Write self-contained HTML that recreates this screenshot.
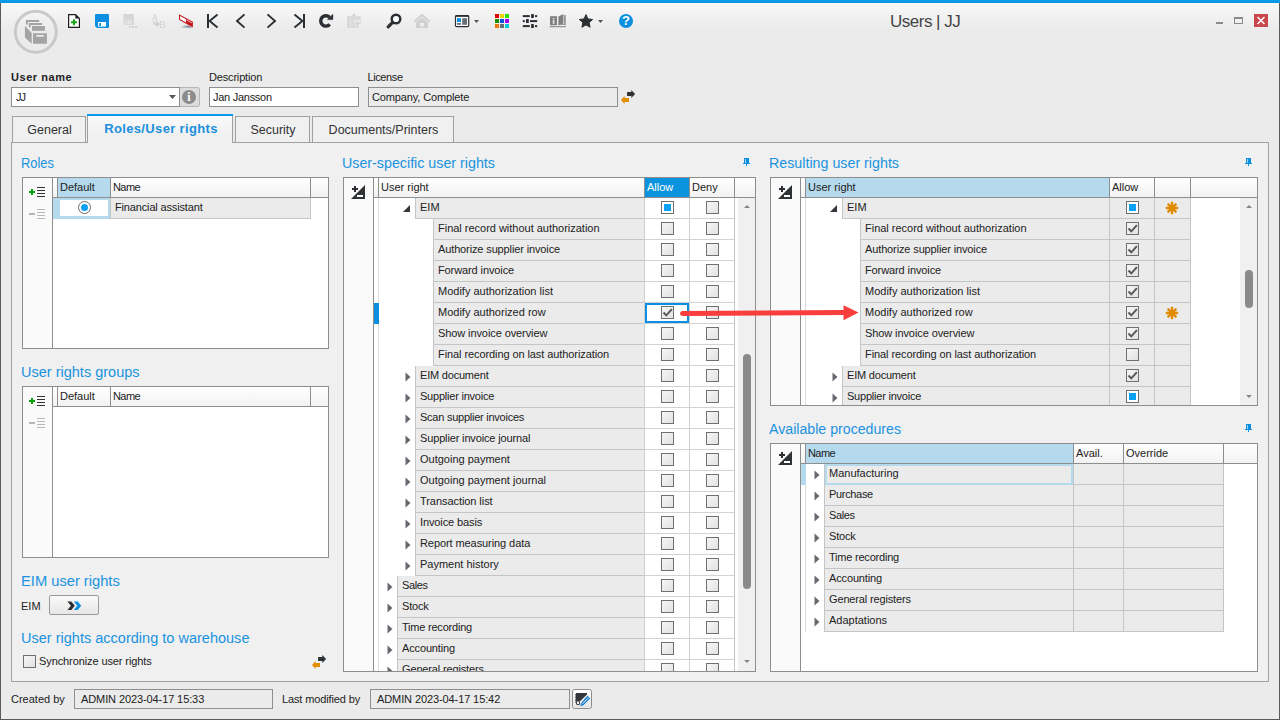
<!DOCTYPE html><html><head><meta charset="utf-8"><title>Users | JJ</title><style>
html,body{margin:0;padding:0;}
html{background:#ebebeb;}
body{width:1280px;height:720px;overflow:hidden;background:#ebebeb;font-family:"Liberation Sans",sans-serif;font-size:11px;color:#222;position:relative;}
div,span,svg{position:absolute;box-sizing:border-box;}
.t{white-space:nowrap;line-height:13px;height:13px;}
.h{font-size:15.5px;transform-origin:0 0;color:#1a93e0;line-height:18px;height:18px;white-space:nowrap;}
.grid{background:#fff;border:1px solid #8e8e8e;overflow:hidden;}
.side{left:0;top:0;bottom:0;background:#fafafa;border-right:1px solid #8e8e8e;}
.hd{background:linear-gradient(#ffffff,#f2f2f2);border-right:1px solid #8e8e8e;border-bottom:1px solid #8e8e8e;height:20px;top:0;}
.hd .t{top:3px;left:2px;}
.hdsel{background:#b5d9ed;}
.hdblue{background:#0b93dd;color:#fff;}
.cell{background:#ebebeb;border-left:1px solid #c5c5c5;border-bottom:1px solid #c5c5c5;height:21px;}
.cw{background:#fff;border-left:1px solid #cfcfcf;border-bottom:1px solid #d2d2d2;height:21px;}
.cell .t{top:3px;left:4px;}
.cb{width:13px;height:13px;border:1px solid #707070;background:linear-gradient(135deg,#f6f6f6,#e2e2e2);}
.inp{background:#fff;border:1px solid #8e8e8e;height:20px;}
.inp .t{top:3px;left:4px;}
.ro{background:#ebebeb;}
.tab{border:1px solid #a0a0a0;border-bottom:none;background:#f0f0f0;font-size:12.5px;text-align:center;line-height:15px;white-space:nowrap;}
</style></head><body>
<div style="left:0;top:0;width:1280px;height:60px;background:linear-gradient(#fafafa,#ebebeb 30px)"></div>
<div style="left:0;top:0;width:1280px;height:3px;background:linear-gradient(#08a2ee,#0b92de)"></div>
<div style="left:0;top:3px;width:1px;height:717px;background:#5a5a5a"></div>
<div style="left:1279px;top:3px;width:1px;height:717px;background:#5a5a5a"></div>
<div style="left:0;top:719px;width:1280px;height:1px;background:#5a5a5a"></div>
<svg style="left:13px;top:9px" width="46" height="46" viewBox="0 0 46 46"><circle cx="22.8" cy="22.8" r="20.5" fill="none" stroke="#c9c9c9" stroke-width="3"/><g fill="#a4a4a4"><path d="M12.9 10.9 H26.1 V12.9 H14.8 V15.6 H12.9 Z"/><path d="M15.8 14.1 H29 V16 H17.7 V18.3 H15.8 Z"/><rect x="19" y="17" width="12.9" height="4.8"/><path d="M11.95 17 L18.7 23.9 V34.7 L11.95 28.4 Z"/><path d="M20 24.2 H33.9 V34.7 H20 Z M23.2 26.1 V27.8 H30.9 V26.1 Z" fill-rule="evenodd"/></g></svg>
<svg style="left:67px;top:13px" width="14" height="16" viewBox="0 0 14 16"><path d="M1.6 1.6 H8.6 L12.4 5.4 V14.4 H1.6 Z" fill="#fff" stroke="#1e1e1e" stroke-width="1.2"/><path d="M8.4 1.4 L12.6 5.6 H8.4 Z" fill="#1e1e1e"/><path d="M4 9.2 H10 M7 6.2 V12.2" stroke="#10a810" stroke-width="1.9"/></svg>
<svg style="left:95px;top:14px" width="14" height="14" viewBox="0 0 14 14"><path d="M1.2 0 H12.8 Q14 0 14 1.2 V12.8 Q14 14 12.8 14 H2 L0 12 V1.2 Q0 0 1.2 0 Z" fill="#0c8fe0"/><rect x="3" y="8" width="8" height="4.6" fill="#fff"/><rect x="4.2" y="9" width="1.8" height="3" fill="#0c8fe0"/></svg>
<svg style="left:122px;top:14px" width="16" height="14" viewBox="0 0 16 14"><path d="M2 0 H11 Q12 0 12 1 V11 H2.8 L1.4 9.6 V0.6 Q1.4 0 2 0 Z" fill="#d6d6d6"/><rect x="3" y="6.5" width="6.5" height="3.6" fill="#e6e6e6"/><rect x="4" y="7.4" width="1.5" height="2" fill="#d0d0d0"/><rect x="7" y="12" width="2" height="1.8" fill="#d0d0d0"/><rect x="10" y="12" width="2" height="1.8" fill="#d0d0d0"/><rect x="13" y="12" width="2" height="1.8" fill="#d0d0d0"/></svg>
<span style="left:151px;top:13px;font-family:'Liberation Serif',serif;font-size:10px;line-height:10px;color:#d2d2d2">A</span>
<span style="left:159px;top:19.5px;font-family:'Liberation Serif',serif;font-size:10px;line-height:10px;color:#d2d2d2">B</span>
<svg style="left:153px;top:21px" width="7" height="6" viewBox="0 0 7 6"><path d="M1 0 V3 H5 M3.3 0.8 L5.8 3 L3.3 5.2" fill="none" stroke="#cdcdcd" stroke-width="1.4"/></svg>
<svg style="left:178px;top:13px" width="17" height="16" viewBox="0 0 17 16"><defs><linearGradient id="esh" x1="0" x2="1" y1="0" y2="0"><stop offset="0" stop-color="#5f7680" stop-opacity="0"/><stop offset="0.55" stop-color="#5f7680" stop-opacity="0.6"/><stop offset="1" stop-color="#4f646e" stop-opacity="0.95"/></linearGradient></defs><path d="M1.5 14.8 H14 L10.5 12.4 H5.5 Z" fill="url(#esh)"/><path d="M1 1.2 L14.85 8.8 V14.6 L1 6.8 Z" fill="#c8191e"/><path d="M2 2.95 L8.05 6.3 V9.5 L2 6.1 Z" fill="#fff"/><path d="M8.8 7.1 L13.9 9.8" stroke="#fff" stroke-width="0.8" opacity="0.85"/></svg>
<svg style="left:206px;top:13px" width="13" height="16" viewBox="0 0 13 16"><path d="M2 1 V15" stroke="#2b2f33" stroke-width="2" fill="none"/><path d="M11.5 1.4 L3.6 8 L11.5 14.6" stroke="#2b2f33" stroke-width="1.9" fill="none"/></svg>
<svg style="left:235px;top:13px" width="11" height="16" viewBox="0 0 11 16"><path d="M9.5 1.4 L2 8 L9.5 14.6" stroke="#2b2f33" stroke-width="1.9" fill="none"/></svg>
<svg style="left:266px;top:13px" width="11" height="16" viewBox="0 0 11 16"><path d="M1.5 1.4 L9 8 L1.5 14.6" stroke="#2b2f33" stroke-width="1.9" fill="none"/></svg>
<svg style="left:293px;top:13px" width="13" height="16" viewBox="0 0 13 16"><path d="M11 1 V15" stroke="#2b2f33" stroke-width="2" fill="none"/><path d="M1.5 1.4 L9.4 8 L1.5 14.6" stroke="#2b2f33" stroke-width="1.9" fill="none"/></svg>
<svg style="left:318px;top:13px" width="16" height="16" viewBox="0 0 16 16"><path d="M11.58 4.22 A5.2 5.2 0 1 0 11.76 11.38" stroke="#2b2f33" stroke-width="3.4" fill="none"/><path d="M14.85 1.2 V6.6 H9.5 Z" fill="#2b2f33" stroke="#2b2f33" stroke-width="0.5" stroke-linejoin="round"/></svg>
<svg style="left:346px;top:12px" width="17" height="18" viewBox="0 0 17 18"><path d="M1.2 4.2 H5.8 L8 1 L10.2 4.2 H14.8 V7.4 H7.7 V10 L10.1 12.9 V15.85 H1.2 Z" fill="#d6d6d6"/><path d="M3 5.1 H13" stroke="#e2e2e2" stroke-width="0.6"/><g fill="#efefef"><rect x="3.9" y="6.6" width="1.4" height="1.4"/><rect x="3.9" y="8.8" width="1.4" height="1.4"/><rect x="3.9" y="11" width="1.4" height="1.4"/><rect x="3.9" y="13.2" width="1.4" height="1.4"/></g><path d="M6 8.6 H7.6 M6 10.8 H7.6 M6 13 H9 " stroke="#e6e6e6" stroke-width="0.7"/><path d="M8.2 8.3 H16" stroke="#d6d6d6" stroke-width="0.8"/><path d="M8.2 9.9 H15.9 L12.6 12.7 V16.8 L10.8 15.4 V12.7 Z" fill="#d6d6d6"/></svg>
<svg style="left:386px;top:13px" width="16" height="16" viewBox="0 0 16 16"><circle cx="10" cy="6" r="4.3" fill="#fff" stroke="#2b2f33" stroke-width="2.4"/><path d="M6.6 9.4 L2.2 13.8" stroke="#2b2f33" stroke-width="3.2" stroke-linecap="round"/></svg>
<svg style="left:413px;top:13px" width="18" height="16" viewBox="0 0 18 16"><path d="M9 0.8 L17.6 8 L16.4 9.6 L9 3.6 L1.6 9.6 L0.4 8 Z" fill="#d0d0d0"/><path d="M3 9.2 L9 4.6 L15 9.2 V15 H3 Z M7 10 V13.4 H11 V10 Z" fill="#d0d0d0" fill-rule="evenodd"/></svg>
<svg style="left:454px;top:14px" width="16" height="14" viewBox="0 0 16 14"><rect x="1.5" y="1.6" width="13.2" height="11" rx="1.2" fill="#fff" stroke="#2b2f33" stroke-width="1.2"/><rect x="1.5" y="1.2" width="13.2" height="1.6" fill="#2b2f33"/><rect x="3" y="4.2" width="4" height="3.8" fill="#0c8fe0"/><rect x="3" y="9" width="4" height="1.8" fill="#6a6e76"/><rect x="8.2" y="4.2" width="4.8" height="6.6" fill="#6a6e76"/></svg>
<svg style="left:474px;top:20px" width="5" height="3" viewBox="0 0 5 3"><path d="M0 0 H5 L2.5 3 Z" fill="#555"/></svg>
<svg style="left:495px;top:14px" width="14" height="14" viewBox="0 0 14 14"><rect x="0" y="0" width="4" height="4" fill="#e00000"/><rect x="5" y="0" width="4" height="4" fill="#efd800"/><rect x="10" y="0" width="4" height="4" fill="#2de000"/><rect x="0" y="5" width="4" height="4" fill="#1c8c00"/><rect x="5" y="5" width="4" height="4" fill="#0050d8"/><rect x="10" y="5" width="4" height="4" fill="#a000f0"/><rect x="0" y="10" width="4" height="4" fill="#f07810"/><rect x="5" y="10" width="4" height="4" fill="#6a6e76"/><rect x="10" y="10" width="4" height="4" fill="#00c8d8"/></svg>
<svg style="left:522px;top:13px" width="16" height="16" viewBox="0 0 16 16"><g fill="#2b2f33"><rect x="0.8" y="2.1" width="7" height="2"/><rect x="9.1" y="0.9" width="2.8" height="4.2" rx="0.7"/><rect x="13" y="2.1" width="2.2" height="2"/><rect x="0.8" y="7.1" width="2" height="2"/><rect x="4" y="5.9" width="2.8" height="4.2" rx="0.7"/><rect x="8" y="7.1" width="7.2" height="2"/><rect x="0.8" y="12.1" width="7" height="2"/><rect x="9.1" y="10.9" width="2.8" height="4.2" rx="0.7"/><rect x="13" y="12.1" width="2.2" height="2"/></g></svg>
<svg style="left:549px;top:13px" width="18" height="15" viewBox="0 0 18 15"><rect x="1" y="3.2" width="7" height="9" fill="#808080"/><rect x="3.8" y="5" width="1.6" height="1.4" fill="#ececec"/><rect x="3.8" y="7.2" width="1.6" height="3.6" fill="#ececec"/><path d="M9.4 3.4 L14.4 1 V10.4 L9.4 12.4 Z" fill="#808080"/><path d="M15.2 2 H16.6 V12 H10.4 L12 11.2 H15.2 Z" fill="#808080"/><rect x="0.6" y="13.2" width="16.4" height="1" fill="#808080"/></svg>
<svg style="left:578px;top:13px" width="16" height="16" viewBox="0 0 16 16"><polygon points="8.00,1.60 9.94,5.93 14.66,6.44 11.14,9.62 12.11,14.26 8.00,11.90 3.89,14.26 4.86,9.62 1.34,6.44 6.06,5.93" fill="#2b2f33" stroke="#2b2f33" stroke-width="1" stroke-linejoin="round"/></svg>
<svg style="left:598px;top:20px" width="5" height="3" viewBox="0 0 5 3"><path d="M0 0 H5 L2.5 3 Z" fill="#555"/></svg>
<div style="left:619px;top:14px;width:14px;height:14px;border-radius:7px;background:#0c8fe0"></div>
<span style="left:619px;top:14px;width:14px;height:14px;text-align:center;color:#fff;font-weight:bold;font-size:13px;line-height:14px">?</span>
<span class="t" style="left:890px;top:12px;font-size:17px;letter-spacing:-0.5px;color:#444;line-height:20px;height:20px">Users | JJ</span>
<div style="left:1216px;top:22px;width:7px;height:2px;background:#8a8a8a"></div>
<div style="left:1234px;top:17px;width:9px;height:7px;border:1px solid #8a8a8a;border-top-width:2px"></div>
<div style="left:1254px;top:14px;width:14px;height:13px;background:#c8464c"></div>
<svg style="left:1254px;top:14px" width="14" height="13" viewBox="0 0 14 13"><path d="M3.5 3 L10.5 10 M10.5 3 L3.5 10" stroke="#fff" stroke-width="1.5"/></svg>
<span class="t" style="left:11px;top:71px;font-weight:bold;letter-spacing:0.55px">User name</span>
<span class="t" style="left:209px;top:71px;letter-spacing:-0.17px">Description</span>
<span class="t" style="left:367.5px;top:71px;letter-spacing:-0.4px">License</span>
<div class="inp" style="left:11px;top:87px;width:169px"><span class="t" style="letter-spacing:-1px">JJ</span><svg style="left:157px;top:7px" width="7" height="4" viewBox="0 0 7 4"><path d="M0 0 H7 L3.5 4 Z" fill="#555"/></svg></div>
<div style="left:180px;top:87px;width:20px;height:20px;background:#dcdcdc;border:1px solid #b6b6b6;border-left:none;border-radius:0 3px 3px 0"></div>
<div style="left:182px;top:90px;width:14px;height:14px;border-radius:7px;background:#8c8c8c"></div>
<span style="left:182px;top:90px;width:14px;height:14px;text-align:center;color:#fff;font-weight:bold;font-size:12px;line-height:14px;font-family:'Liberation Serif',serif">i</span>
<div class="inp" style="left:209px;top:87px;width:150px"><span class="t" style="left:3px;letter-spacing:-0.27px">Jan Jansson</span></div>
<div class="inp ro" style="left:368px;top:87px;width:250px"><span class="t" style="left:3px;letter-spacing:-0.13px">Company, Complete</span></div>
<svg style="left:621px;top:90px" width="15" height="14" viewBox="0 0 15 14"><path d="M6.1 2.1 H10.3 V0.1 L14.1 4 L10.3 7.9 V5.9 H6.1 Z" fill="#2f3336"/><path d="M8 8.1 H3.6 V6.1 L0 10 L3.6 13.9 V12 H8 Z" fill="#e38d00"/></svg>
<div style="left:11px;top:142px;width:1258px;height:540px;background:#f0f0f0;border:1px solid #a0a0a0"></div>
<div class="tab" style="left:12px;top:116px;width:74px;height:26px;padding-top:6px;padding-left:1px;color:#333;letter-spacing:0">General</div>
<div class="tab" style="left:235px;top:116px;width:75px;height:26px;padding-top:6px;padding-left:1px;color:#333;letter-spacing:0">Security</div>
<div class="tab" style="left:312px;top:116px;width:142px;height:26px;padding-top:6px;padding-left:1px;color:#333;letter-spacing:0">Documents/Printers</div>
<div class="tab" style="left:87px;top:114px;width:146px;height:29px;border-top:none;background:linear-gradient(#fbfbfb,#f0f0f0 22px);color:#1b8fdc;font-weight:bold;font-size:13px;letter-spacing:0.35px;padding-top:7px;padding-left:2px">Roles/User rights<div style="left:-1px;top:0;width:146px;height:2px;background:#0a98ea"></div></div>
<span class="h" style="left:21px;top:153.5px;transform:scaleX(0.832)">Roles</span>
<div class="grid" style="left:22px;top:177px;width:307px;height:172px"><div class="side" style="width:30px"></div><svg style="left:6px;top:9px" width="17" height="10" viewBox="0 0 17 10" shape-rendering="crispEdges"><rect x="0" y="4" width="6" height="2" fill="#0aa00a"/><rect x="2" y="2" width="2" height="6" fill="#0aa00a"/><rect x="8" y="0" width="8" height="1" fill="#2f3336"/><rect x="8" y="3" width="8" height="1" fill="#2f3336"/><rect x="8" y="6" width="8" height="1" fill="#2f3336"/><rect x="8" y="9" width="8" height="1" fill="#2f3336"/></svg><svg style="left:6px;top:31px" width="17" height="10" viewBox="0 0 17 10" shape-rendering="crispEdges"><rect x="0" y="4" width="6" height="2" fill="#b4b4b4"/><rect x="8" y="0" width="8" height="1" fill="#b8b8b8"/><rect x="8" y="3" width="8" height="1" fill="#b8b8b8"/><rect x="8" y="6" width="8" height="1" fill="#b8b8b8"/><rect x="8" y="9" width="8" height="1" fill="#b8b8b8"/></svg><div class="hd" style="left:30px;width:5px"></div><div class="hd hdsel" style="left:35px;width:53px"><span class="t">Default</span></div><div class="hd" style="left:88px;width:200px"><span class="t" style="letter-spacing:-0.57px">Name</span></div><div class="hd" style="left:288px;width:20px;border-right:none"></div><div style="left:30px;top:20px;width:58px;height:21px;background:#b5d9ed"></div><div style="left:37px;top:22px;width:48px;height:16px;background:#fff"></div><div style="left:55px;top:22.8px;width:13px;height:13px;border-radius:7px;border:1.3px solid #6c6c6c;background:#fff"></div><div style="left:57.8px;top:25.6px;width:7.4px;height:7.4px;border-radius:4px;background:#0aa0f5"></div><div class="cell" style="left:87px;top:20px;width:201px;border-right:1px solid #c5c5c5"><span class="t" style="letter-spacing:-0.153px">Financial assistant</span></div></div>
<span class="h" style="left:21px;top:362.5px;transform:scaleX(0.936)">User rights groups</span>
<div class="grid" style="left:22px;top:386px;width:307px;height:172px"><div class="side" style="width:30px"></div><svg style="left:6px;top:9px" width="17" height="10" viewBox="0 0 17 10" shape-rendering="crispEdges"><rect x="0" y="4" width="6" height="2" fill="#0aa00a"/><rect x="2" y="2" width="2" height="6" fill="#0aa00a"/><rect x="8" y="0" width="8" height="1" fill="#2f3336"/><rect x="8" y="3" width="8" height="1" fill="#2f3336"/><rect x="8" y="6" width="8" height="1" fill="#2f3336"/><rect x="8" y="9" width="8" height="1" fill="#2f3336"/></svg><svg style="left:6px;top:31px" width="17" height="10" viewBox="0 0 17 10" shape-rendering="crispEdges"><rect x="0" y="4" width="6" height="2" fill="#b4b4b4"/><rect x="8" y="0" width="8" height="1" fill="#b8b8b8"/><rect x="8" y="3" width="8" height="1" fill="#b8b8b8"/><rect x="8" y="6" width="8" height="1" fill="#b8b8b8"/><rect x="8" y="9" width="8" height="1" fill="#b8b8b8"/></svg><div class="hd" style="left:30px;width:5px"></div><div class="hd " style="left:35px;width:53px"><span class="t">Default</span></div><div class="hd" style="left:88px;width:200px"><span class="t" style="letter-spacing:-0.57px">Name</span></div><div class="hd" style="left:288px;width:20px;border-right:none"></div></div>
<span class="h" style="left:21px;top:571.5px;transform:scaleX(0.948)">EIM user rights</span>
<span class="t" style="left:21px;top:600px;">EIM</span>
<div style="left:49px;top:595px;width:50px;height:20px;border:1px solid #9a9a9a;border-radius:2px;background:linear-gradient(#fafafa,#e6e6e6)"></div>
<svg style="left:67px;top:600.5px" width="15" height="9.6" viewBox="0 0 14 9"><path d="M0.3 0.5 H4 L7.3 4.5 L4 8.5 H0.3 L3.6 4.5 Z" fill="#2b2f33"/><path d="M6.3 0.5 H10 L13.3 4.5 L10 8.5 H6.3 L9.6 4.5 Z" fill="#0c8fe0"/></svg>
<span class="h" style="left:21px;top:628.5px;transform:scaleX(0.937)">User rights according to warehouse</span>
<div class="cb" style="left:23px;top:655px"></div>
<span class="t" style="left:39px;top:655px;letter-spacing:-0.1px">Synchronize user rights</span>
<svg style="left:312px;top:655px" width="15" height="14" viewBox="0 0 15 14"><path d="M6.1 2.1 H10.3 V0.1 L14.1 4 L10.3 7.9 V5.9 H6.1 Z" fill="#2f3336"/><path d="M8 8.1 H3.6 V6.1 L0 10 L3.6 13.9 V12 H8 Z" fill="#e38d00"/></svg>
<span class="h" style="left:342px;top:153.5px;transform:scaleX(0.92)">User-specific user rights</span>
<svg style="left:743px;top:158px" width="7" height="8" viewBox="0 0 7 8" shape-rendering="crispEdges"><rect x="1" y="0" width="5" height="5" fill="#0a8fe0"/><rect x="0" y="5" width="7" height="1" fill="#0a8fe0"/><rect x="3" y="6" width="1" height="2" fill="#0a8fe0"/><rect x="2" y="1" width="1" height="4" fill="#9fd0f0"/></svg>
<div class="grid" style="left:343px;top:177px;width:413px;height:495px"><div class="side" style="width:30px"></div><svg style="left:7px;top:7px" width="14" height="14" viewBox="0 0 14 14"><path d="M14 0 V14 H0 Z" fill="#2f3336"/><path d="M1 4 H7 M4 1 V7" stroke="#2b2f33" stroke-width="2" fill="none"/><rect x="6" y="10" width="6" height="2" fill="#fff"/></svg><div class="hd" style="left:30px;width:5px"></div><div class="hd" style="left:35px;width:266px"><span class="t">User right</span></div><div class="hd hdblue" style="left:301px;width:45px"><span class="t">Allow</span></div><div class="hd" style="left:346px;width:45px"><span class="t">Deny</span></div><div class="hd" style="left:391px;width:21px;border-right:none"></div><div style="left:30px;top:20px;width:5px;bottom:0;border-right:1px solid #dcdcdc;background:#fff"></div><div style="left:394px;top:20px;width:17px;bottom:0;background:#f0f0f0"></div><svg style="left:400px;top:27px" width="6" height="3" viewBox="0 0 6 3"><path d="M0 3 H6 L3 0 Z" fill="#868686"/></svg><svg style="left:400px;top:482px" width="6" height="3" viewBox="0 0 6 3"><path d="M0 0 H6 L3 3 Z" fill="#868686"/></svg><div style="left:399px;top:176px;width:8px;height:235px;border-radius:4px;background:#8a8a8a"></div><div class="cell" style="left:71px;top:20px;width:229px"><span class="t" style="">EIM</span></div><svg style="left:59px;top:27px" width="7" height="7" viewBox="0 0 7 7"><path d="M7 0 V7 H0 Z" fill="#33373b"/></svg><div class="cw" style="left:300px;top:20px;width:45px"></div><div class="cw" style="left:345px;top:20px;width:46px;border-right:1px solid #c5c5c5"></div><div class="cb" style="left:317px;top:23px;background:#fff"><div style="left:2px;top:2px;width:7px;height:7px;background:#0aa0f5"></div></div><div class="cb" style="left:362px;top:23px"></div><div class="cell" style="left:89px;top:41px;width:211px"><span class="t" style="letter-spacing:-0.015px">Final record without authorization</span></div><div class="cw" style="left:300px;top:41px;width:45px"></div><div class="cw" style="left:345px;top:41px;width:46px;border-right:1px solid #c5c5c5"></div><div class="cb" style="left:317px;top:44px"></div><div class="cb" style="left:362px;top:44px"></div><div class="cell" style="left:89px;top:62px;width:211px"><span class="t" style="letter-spacing:-0.127px">Authorize supplier invoice</span></div><div class="cw" style="left:300px;top:62px;width:45px"></div><div class="cw" style="left:345px;top:62px;width:46px;border-right:1px solid #c5c5c5"></div><div class="cb" style="left:317px;top:65px"></div><div class="cb" style="left:362px;top:65px"></div><div class="cell" style="left:89px;top:83px;width:211px"><span class="t" style="letter-spacing:-0.107px">Forward invoice</span></div><div class="cw" style="left:300px;top:83px;width:45px"></div><div class="cw" style="left:345px;top:83px;width:46px;border-right:1px solid #c5c5c5"></div><div class="cb" style="left:317px;top:86px"></div><div class="cb" style="left:362px;top:86px"></div><div class="cell" style="left:89px;top:104px;width:211px"><span class="t" style="">Modify authorization list</span></div><div class="cw" style="left:300px;top:104px;width:45px"></div><div class="cw" style="left:345px;top:104px;width:46px;border-right:1px solid #c5c5c5"></div><div class="cb" style="left:317px;top:107px"></div><div class="cb" style="left:362px;top:107px"></div><div class="cell" style="left:89px;top:125px;width:211px"><span class="t" style="">Modify authorized row</span></div><div class="cw" style="left:300px;top:125px;width:45px"></div><div class="cw" style="left:345px;top:125px;width:46px;border-right:1px solid #c5c5c5"></div><div class="cb" style="left:317px;top:128px"><svg style="left:0;top:0" width="11" height="11" viewBox="0 0 11 11"><path d="M1.5 5.5 L4.3 8.4 L9.9 2.2" fill="none" stroke="#585858" stroke-width="2"/></svg></div><div class="cb" style="left:362px;top:128px"></div><div style="left:30px;top:125px;width:5px;height:21px;background:#0c8fe0"></div><div style="left:301px;top:125px;width:44px;height:20px;border:2px solid #0c8fe0"></div><div class="cell" style="left:89px;top:146px;width:211px"><span class="t" style="letter-spacing:-0.095px">Show invoice overview</span></div><div class="cw" style="left:300px;top:146px;width:45px"></div><div class="cw" style="left:345px;top:146px;width:46px;border-right:1px solid #c5c5c5"></div><div class="cb" style="left:317px;top:149px"></div><div class="cb" style="left:362px;top:149px"></div><div class="cell" style="left:89px;top:167px;width:211px"><span class="t" style="letter-spacing:-0.086px">Final recording on last authorization</span></div><div class="cw" style="left:300px;top:167px;width:45px"></div><div class="cw" style="left:345px;top:167px;width:46px;border-right:1px solid #c5c5c5"></div><div class="cb" style="left:317px;top:170px"></div><div class="cb" style="left:362px;top:170px"></div><div class="cell" style="left:71px;top:188px;width:229px"><span class="t" style="letter-spacing:-0.200px">EIM document</span></div><svg style="left:61px;top:194px" width="6" height="10" viewBox="0 0 6 10"><path d="M0.5 0.5 L5.5 5 L0.5 9.5 Z" fill="#666a70"/></svg><div class="cw" style="left:300px;top:188px;width:45px"></div><div class="cw" style="left:345px;top:188px;width:46px;border-right:1px solid #c5c5c5"></div><div class="cb" style="left:317px;top:191px"></div><div class="cb" style="left:362px;top:191px"></div><div class="cell" style="left:71px;top:209px;width:229px"><span class="t" style="letter-spacing:-0.219px">Supplier invoice</span></div><svg style="left:61px;top:215px" width="6" height="10" viewBox="0 0 6 10"><path d="M0.5 0.5 L5.5 5 L0.5 9.5 Z" fill="#666a70"/></svg><div class="cw" style="left:300px;top:209px;width:45px"></div><div class="cw" style="left:345px;top:209px;width:46px;border-right:1px solid #c5c5c5"></div><div class="cb" style="left:317px;top:212px"></div><div class="cb" style="left:362px;top:212px"></div><div class="cell" style="left:71px;top:230px;width:229px"><span class="t" style="letter-spacing:-0.245px">Scan supplier invoices</span></div><svg style="left:61px;top:236px" width="6" height="10" viewBox="0 0 6 10"><path d="M0.5 0.5 L5.5 5 L0.5 9.5 Z" fill="#666a70"/></svg><div class="cw" style="left:300px;top:230px;width:45px"></div><div class="cw" style="left:345px;top:230px;width:46px;border-right:1px solid #c5c5c5"></div><div class="cb" style="left:317px;top:233px"></div><div class="cb" style="left:362px;top:233px"></div><div class="cell" style="left:71px;top:251px;width:229px"><span class="t" style="letter-spacing:-0.146px">Supplier invoice journal</span></div><svg style="left:61px;top:257px" width="6" height="10" viewBox="0 0 6 10"><path d="M0.5 0.5 L5.5 5 L0.5 9.5 Z" fill="#666a70"/></svg><div class="cw" style="left:300px;top:251px;width:45px"></div><div class="cw" style="left:345px;top:251px;width:46px;border-right:1px solid #c5c5c5"></div><div class="cb" style="left:317px;top:254px"></div><div class="cb" style="left:362px;top:254px"></div><div class="cell" style="left:71px;top:272px;width:229px"><span class="t" style="">Outgoing payment</span></div><svg style="left:61px;top:278px" width="6" height="10" viewBox="0 0 6 10"><path d="M0.5 0.5 L5.5 5 L0.5 9.5 Z" fill="#666a70"/></svg><div class="cw" style="left:300px;top:272px;width:45px"></div><div class="cw" style="left:345px;top:272px;width:46px;border-right:1px solid #c5c5c5"></div><div class="cb" style="left:317px;top:275px"></div><div class="cb" style="left:362px;top:275px"></div><div class="cell" style="left:71px;top:293px;width:229px"><span class="t" style="">Outgoing payment journal</span></div><svg style="left:61px;top:299px" width="6" height="10" viewBox="0 0 6 10"><path d="M0.5 0.5 L5.5 5 L0.5 9.5 Z" fill="#666a70"/></svg><div class="cw" style="left:300px;top:293px;width:45px"></div><div class="cw" style="left:345px;top:293px;width:46px;border-right:1px solid #c5c5c5"></div><div class="cb" style="left:317px;top:296px"></div><div class="cb" style="left:362px;top:296px"></div><div class="cell" style="left:71px;top:314px;width:229px"><span class="t" style="letter-spacing:-0.062px">Transaction list</span></div><svg style="left:61px;top:320px" width="6" height="10" viewBox="0 0 6 10"><path d="M0.5 0.5 L5.5 5 L0.5 9.5 Z" fill="#666a70"/></svg><div class="cw" style="left:300px;top:314px;width:45px"></div><div class="cw" style="left:345px;top:314px;width:46px;border-right:1px solid #c5c5c5"></div><div class="cb" style="left:317px;top:317px"></div><div class="cb" style="left:362px;top:317px"></div><div class="cell" style="left:71px;top:335px;width:229px"><span class="t" style="letter-spacing:-0.115px">Invoice basis</span></div><svg style="left:61px;top:341px" width="6" height="10" viewBox="0 0 6 10"><path d="M0.5 0.5 L5.5 5 L0.5 9.5 Z" fill="#666a70"/></svg><div class="cw" style="left:300px;top:335px;width:45px"></div><div class="cw" style="left:345px;top:335px;width:46px;border-right:1px solid #c5c5c5"></div><div class="cb" style="left:317px;top:338px"></div><div class="cb" style="left:362px;top:338px"></div><div class="cell" style="left:71px;top:356px;width:229px"><span class="t" style="letter-spacing:-0.081px">Report measuring data</span></div><svg style="left:61px;top:362px" width="6" height="10" viewBox="0 0 6 10"><path d="M0.5 0.5 L5.5 5 L0.5 9.5 Z" fill="#666a70"/></svg><div class="cw" style="left:300px;top:356px;width:45px"></div><div class="cw" style="left:345px;top:356px;width:46px;border-right:1px solid #c5c5c5"></div><div class="cb" style="left:317px;top:359px"></div><div class="cb" style="left:362px;top:359px"></div><div class="cell" style="left:71px;top:377px;width:229px"><span class="t" style="">Payment history</span></div><svg style="left:61px;top:383px" width="6" height="10" viewBox="0 0 6 10"><path d="M0.5 0.5 L5.5 5 L0.5 9.5 Z" fill="#666a70"/></svg><div class="cw" style="left:300px;top:377px;width:45px"></div><div class="cw" style="left:345px;top:377px;width:46px;border-right:1px solid #c5c5c5"></div><div class="cb" style="left:317px;top:380px"></div><div class="cb" style="left:362px;top:380px"></div><div class="cell" style="left:53px;top:398px;width:247px"><span class="t" style="letter-spacing:-0.400px">Sales</span></div><svg style="left:43px;top:404px" width="6" height="10" viewBox="0 0 6 10"><path d="M0.5 0.5 L5.5 5 L0.5 9.5 Z" fill="#666a70"/></svg><div class="cw" style="left:300px;top:398px;width:45px"></div><div class="cw" style="left:345px;top:398px;width:46px;border-right:1px solid #c5c5c5"></div><div class="cb" style="left:317px;top:401px"></div><div class="cb" style="left:362px;top:401px"></div><div class="cell" style="left:53px;top:419px;width:247px"><span class="t" style="letter-spacing:-0.200px">Stock</span></div><svg style="left:43px;top:425px" width="6" height="10" viewBox="0 0 6 10"><path d="M0.5 0.5 L5.5 5 L0.5 9.5 Z" fill="#666a70"/></svg><div class="cw" style="left:300px;top:419px;width:45px"></div><div class="cw" style="left:345px;top:419px;width:46px;border-right:1px solid #c5c5c5"></div><div class="cb" style="left:317px;top:422px"></div><div class="cb" style="left:362px;top:422px"></div><div class="cell" style="left:53px;top:440px;width:247px"><span class="t" style="letter-spacing:-0.214px">Time recording</span></div><svg style="left:43px;top:446px" width="6" height="10" viewBox="0 0 6 10"><path d="M0.5 0.5 L5.5 5 L0.5 9.5 Z" fill="#666a70"/></svg><div class="cw" style="left:300px;top:440px;width:45px"></div><div class="cw" style="left:345px;top:440px;width:46px;border-right:1px solid #c5c5c5"></div><div class="cb" style="left:317px;top:443px"></div><div class="cb" style="left:362px;top:443px"></div><div class="cell" style="left:53px;top:461px;width:247px"><span class="t" style="letter-spacing:-0.140px">Accounting</span></div><svg style="left:43px;top:467px" width="6" height="10" viewBox="0 0 6 10"><path d="M0.5 0.5 L5.5 5 L0.5 9.5 Z" fill="#666a70"/></svg><div class="cw" style="left:300px;top:461px;width:45px"></div><div class="cw" style="left:345px;top:461px;width:46px;border-right:1px solid #c5c5c5"></div><div class="cb" style="left:317px;top:464px"></div><div class="cb" style="left:362px;top:464px"></div><div class="cell" style="left:53px;top:482px;width:247px"><span class="t" style="letter-spacing:-0.147px">General registers</span></div><svg style="left:43px;top:488px" width="6" height="10" viewBox="0 0 6 10"><path d="M0.5 0.5 L5.5 5 L0.5 9.5 Z" fill="#666a70"/></svg><div class="cw" style="left:300px;top:482px;width:45px"></div><div class="cw" style="left:345px;top:482px;width:46px;border-right:1px solid #c5c5c5"></div><div class="cb" style="left:317px;top:485px"></div><div class="cb" style="left:362px;top:485px"></div></div>
<span class="h" style="left:769px;top:153.5px;transform:scaleX(0.92)">Resulting user rights</span>
<svg style="left:1245px;top:158px" width="7" height="8" viewBox="0 0 7 8" shape-rendering="crispEdges"><rect x="1" y="0" width="5" height="5" fill="#0a8fe0"/><rect x="0" y="5" width="7" height="1" fill="#0a8fe0"/><rect x="3" y="6" width="1" height="2" fill="#0a8fe0"/><rect x="2" y="1" width="1" height="4" fill="#9fd0f0"/></svg>
<div class="grid" style="left:770px;top:177px;width:488px;height:229px"><div class="side" style="width:30px"></div><svg style="left:7px;top:7px" width="14" height="14" viewBox="0 0 14 14"><path d="M14 0 V14 H0 Z" fill="#2f3336"/><path d="M1 4 H7 M4 1 V7" stroke="#2b2f33" stroke-width="2" fill="none"/><rect x="6" y="10" width="6" height="2" fill="#fff"/></svg><div class="hd" style="left:30px;width:5px"></div><div class="hd hdsel" style="left:35px;width:304px"><span class="t">User right</span></div><div class="hd" style="left:339px;width:45px"><span class="t">Allow</span></div><div class="hd" style="left:384px;width:36px"></div><div class="hd" style="left:420px;width:70px;border-right:none"></div><div style="left:30px;top:20px;width:5px;bottom:0;border-right:1px solid #dcdcdc;background:#fff"></div><div style="left:469px;top:20px;width:17px;bottom:0;background:#f0f0f0"></div><svg style="left:475px;top:27px" width="6" height="3" viewBox="0 0 6 3"><path d="M0 3 H6 L3 0 Z" fill="#868686"/></svg><svg style="left:475px;top:217px" width="6" height="3" viewBox="0 0 6 3"><path d="M0 0 H6 L3 3 Z" fill="#868686"/></svg><div style="left:474px;top:92px;width:8px;height:38px;border-radius:4px;background:#8a8a8a"></div><div class="cell" style="left:71px;top:20px;width:267px"><span class="t" style="">EIM</span></div><svg style="left:59px;top:27px" width="7" height="7" viewBox="0 0 7 7"><path d="M7 0 V7 H0 Z" fill="#33373b"/></svg><div class="cell" style="left:338px;top:20px;width:45px"></div><div class="cell" style="left:383px;top:20px;width:37px;border-right:1px solid #c5c5c5"></div><div class="cb" style="left:355px;top:23px;background:#fff"><div style="left:2px;top:2px;width:7px;height:7px;background:#0aa0f5"></div></div><svg style="left:394px;top:23px" width="14" height="14" viewBox="-7 -7 14 14"><rect x="-1.2" y="-6.2" width="2.4" height="12.4" rx="0.6" fill="#e08a00" transform="rotate(0)"/><rect x="-1.2" y="-6.2" width="2.4" height="12.4" rx="0.6" fill="#e08a00" transform="rotate(45)"/><rect x="-1.2" y="-6.2" width="2.4" height="12.4" rx="0.6" fill="#e08a00" transform="rotate(90)"/><rect x="-1.2" y="-6.2" width="2.4" height="12.4" rx="0.6" fill="#e08a00" transform="rotate(135)"/></svg><div class="cell" style="left:89px;top:41px;width:249px"><span class="t" style="letter-spacing:-0.015px">Final record without authorization</span></div><div class="cell" style="left:338px;top:41px;width:45px"></div><div class="cell" style="left:383px;top:41px;width:37px;border-right:1px solid #c5c5c5"></div><div class="cb" style="left:355px;top:44px"><svg style="left:0;top:0" width="11" height="11" viewBox="0 0 11 11"><path d="M1.5 5.5 L4.3 8.4 L9.9 2.2" fill="none" stroke="#585858" stroke-width="2"/></svg></div><div class="cell" style="left:89px;top:62px;width:249px"><span class="t" style="letter-spacing:-0.127px">Authorize supplier invoice</span></div><div class="cell" style="left:338px;top:62px;width:45px"></div><div class="cell" style="left:383px;top:62px;width:37px;border-right:1px solid #c5c5c5"></div><div class="cb" style="left:355px;top:65px"><svg style="left:0;top:0" width="11" height="11" viewBox="0 0 11 11"><path d="M1.5 5.5 L4.3 8.4 L9.9 2.2" fill="none" stroke="#585858" stroke-width="2"/></svg></div><div class="cell" style="left:89px;top:83px;width:249px"><span class="t" style="letter-spacing:-0.107px">Forward invoice</span></div><div class="cell" style="left:338px;top:83px;width:45px"></div><div class="cell" style="left:383px;top:83px;width:37px;border-right:1px solid #c5c5c5"></div><div class="cb" style="left:355px;top:86px"><svg style="left:0;top:0" width="11" height="11" viewBox="0 0 11 11"><path d="M1.5 5.5 L4.3 8.4 L9.9 2.2" fill="none" stroke="#585858" stroke-width="2"/></svg></div><div class="cell" style="left:89px;top:104px;width:249px"><span class="t" style="">Modify authorization list</span></div><div class="cell" style="left:338px;top:104px;width:45px"></div><div class="cell" style="left:383px;top:104px;width:37px;border-right:1px solid #c5c5c5"></div><div class="cb" style="left:355px;top:107px"><svg style="left:0;top:0" width="11" height="11" viewBox="0 0 11 11"><path d="M1.5 5.5 L4.3 8.4 L9.9 2.2" fill="none" stroke="#585858" stroke-width="2"/></svg></div><div class="cell" style="left:89px;top:125px;width:249px"><span class="t" style="">Modify authorized row</span></div><div class="cell" style="left:338px;top:125px;width:45px"></div><div class="cell" style="left:383px;top:125px;width:37px;border-right:1px solid #c5c5c5"></div><div class="cb" style="left:355px;top:128px"><svg style="left:0;top:0" width="11" height="11" viewBox="0 0 11 11"><path d="M1.5 5.5 L4.3 8.4 L9.9 2.2" fill="none" stroke="#585858" stroke-width="2"/></svg></div><svg style="left:394px;top:128px" width="14" height="14" viewBox="-7 -7 14 14"><rect x="-1.2" y="-6.2" width="2.4" height="12.4" rx="0.6" fill="#e08a00" transform="rotate(0)"/><rect x="-1.2" y="-6.2" width="2.4" height="12.4" rx="0.6" fill="#e08a00" transform="rotate(45)"/><rect x="-1.2" y="-6.2" width="2.4" height="12.4" rx="0.6" fill="#e08a00" transform="rotate(90)"/><rect x="-1.2" y="-6.2" width="2.4" height="12.4" rx="0.6" fill="#e08a00" transform="rotate(135)"/></svg><div class="cell" style="left:89px;top:146px;width:249px"><span class="t" style="letter-spacing:-0.095px">Show invoice overview</span></div><div class="cell" style="left:338px;top:146px;width:45px"></div><div class="cell" style="left:383px;top:146px;width:37px;border-right:1px solid #c5c5c5"></div><div class="cb" style="left:355px;top:149px"><svg style="left:0;top:0" width="11" height="11" viewBox="0 0 11 11"><path d="M1.5 5.5 L4.3 8.4 L9.9 2.2" fill="none" stroke="#585858" stroke-width="2"/></svg></div><div class="cell" style="left:89px;top:167px;width:249px"><span class="t" style="letter-spacing:-0.086px">Final recording on last authorization</span></div><div class="cell" style="left:338px;top:167px;width:45px"></div><div class="cell" style="left:383px;top:167px;width:37px;border-right:1px solid #c5c5c5"></div><div class="cb" style="left:355px;top:170px"></div><div class="cell" style="left:71px;top:188px;width:267px"><span class="t" style="letter-spacing:-0.200px">EIM document</span></div><svg style="left:61px;top:194px" width="6" height="10" viewBox="0 0 6 10"><path d="M0.5 0.5 L5.5 5 L0.5 9.5 Z" fill="#666a70"/></svg><div class="cell" style="left:338px;top:188px;width:45px"></div><div class="cell" style="left:383px;top:188px;width:37px;border-right:1px solid #c5c5c5"></div><div class="cb" style="left:355px;top:191px"><svg style="left:0;top:0" width="11" height="11" viewBox="0 0 11 11"><path d="M1.5 5.5 L4.3 8.4 L9.9 2.2" fill="none" stroke="#585858" stroke-width="2"/></svg></div><div class="cell" style="left:71px;top:209px;width:267px"><span class="t" style="letter-spacing:-0.219px">Supplier invoice</span></div><svg style="left:61px;top:215px" width="6" height="10" viewBox="0 0 6 10"><path d="M0.5 0.5 L5.5 5 L0.5 9.5 Z" fill="#666a70"/></svg><div class="cell" style="left:338px;top:209px;width:45px"></div><div class="cell" style="left:383px;top:209px;width:37px;border-right:1px solid #c5c5c5"></div><div class="cb" style="left:355px;top:212px;background:#fff"><div style="left:2px;top:2px;width:7px;height:7px;background:#0aa0f5"></div></div></div>
<span class="h" style="left:769px;top:419.5px;transform:scaleX(0.914)">Available procedures</span>
<svg style="left:1245px;top:424px" width="7" height="8" viewBox="0 0 7 8" shape-rendering="crispEdges"><rect x="1" y="0" width="5" height="5" fill="#0a8fe0"/><rect x="0" y="5" width="7" height="1" fill="#0a8fe0"/><rect x="3" y="6" width="1" height="2" fill="#0a8fe0"/><rect x="2" y="1" width="1" height="4" fill="#9fd0f0"/></svg>
<div class="grid" style="left:770px;top:443px;width:488px;height:229px"><div class="side" style="width:30px"></div><svg style="left:7px;top:7px" width="14" height="14" viewBox="0 0 14 14"><path d="M14 0 V14 H0 Z" fill="#2f3336"/><path d="M1 4 H7 M4 1 V7" stroke="#2b2f33" stroke-width="2" fill="none"/><rect x="6" y="10" width="6" height="2" fill="#fff"/></svg><div class="hd" style="left:30px;width:5px"></div><div class="hd hdsel" style="left:35px;width:268px"><span class="t" style="letter-spacing:-0.57px">Name</span></div><div class="hd" style="left:303px;width:50px"><span class="t">Avail.</span></div><div class="hd" style="left:353px;width:100px"><span class="t">Override</span></div><div class="hd" style="left:453px;width:40px;border-right:none"></div><div style="left:30px;top:20px;width:5px;height:168px;border-right:1px solid #dcdcdc;background:#fff"></div><div class="cell" style="left:53px;top:20px;width:249px"><span class="t" style="">Manufacturing</span></div><svg style="left:43px;top:26px" width="6" height="10" viewBox="0 0 6 10"><path d="M0.5 0.5 L5.5 5 L0.5 9.5 Z" fill="#666a70"/></svg><div class="cell" style="left:302px;top:20px;width:50px"></div><div class="cell" style="left:352px;top:20px;width:101px;border-right:1px solid #c5c5c5"></div><div style="left:30px;top:20px;width:5px;height:21px;background:#b5d9ed"></div><div style="left:54px;top:20px;width:248px;height:21px;border:2px solid #b5d9ed"></div><div class="cell" style="left:53px;top:41px;width:249px"><span class="t" style="letter-spacing:-0.325px">Purchase</span></div><svg style="left:43px;top:47px" width="6" height="10" viewBox="0 0 6 10"><path d="M0.5 0.5 L5.5 5 L0.5 9.5 Z" fill="#666a70"/></svg><div class="cell" style="left:302px;top:41px;width:50px"></div><div class="cell" style="left:352px;top:41px;width:101px;border-right:1px solid #c5c5c5"></div><div class="cell" style="left:53px;top:62px;width:249px"><span class="t" style="letter-spacing:-0.400px">Sales</span></div><svg style="left:43px;top:68px" width="6" height="10" viewBox="0 0 6 10"><path d="M0.5 0.5 L5.5 5 L0.5 9.5 Z" fill="#666a70"/></svg><div class="cell" style="left:302px;top:62px;width:50px"></div><div class="cell" style="left:352px;top:62px;width:101px;border-right:1px solid #c5c5c5"></div><div class="cell" style="left:53px;top:83px;width:249px"><span class="t" style="letter-spacing:-0.200px">Stock</span></div><svg style="left:43px;top:89px" width="6" height="10" viewBox="0 0 6 10"><path d="M0.5 0.5 L5.5 5 L0.5 9.5 Z" fill="#666a70"/></svg><div class="cell" style="left:302px;top:83px;width:50px"></div><div class="cell" style="left:352px;top:83px;width:101px;border-right:1px solid #c5c5c5"></div><div class="cell" style="left:53px;top:104px;width:249px"><span class="t" style="letter-spacing:-0.214px">Time recording</span></div><svg style="left:43px;top:110px" width="6" height="10" viewBox="0 0 6 10"><path d="M0.5 0.5 L5.5 5 L0.5 9.5 Z" fill="#666a70"/></svg><div class="cell" style="left:302px;top:104px;width:50px"></div><div class="cell" style="left:352px;top:104px;width:101px;border-right:1px solid #c5c5c5"></div><div class="cell" style="left:53px;top:125px;width:249px"><span class="t" style="letter-spacing:-0.140px">Accounting</span></div><svg style="left:43px;top:131px" width="6" height="10" viewBox="0 0 6 10"><path d="M0.5 0.5 L5.5 5 L0.5 9.5 Z" fill="#666a70"/></svg><div class="cell" style="left:302px;top:125px;width:50px"></div><div class="cell" style="left:352px;top:125px;width:101px;border-right:1px solid #c5c5c5"></div><div class="cell" style="left:53px;top:146px;width:249px"><span class="t" style="letter-spacing:-0.147px">General registers</span></div><svg style="left:43px;top:152px" width="6" height="10" viewBox="0 0 6 10"><path d="M0.5 0.5 L5.5 5 L0.5 9.5 Z" fill="#666a70"/></svg><div class="cell" style="left:302px;top:146px;width:50px"></div><div class="cell" style="left:352px;top:146px;width:101px;border-right:1px solid #c5c5c5"></div><div class="cell" style="left:53px;top:167px;width:249px"><span class="t" style="">Adaptations</span></div><svg style="left:43px;top:173px" width="6" height="10" viewBox="0 0 6 10"><path d="M0.5 0.5 L5.5 5 L0.5 9.5 Z" fill="#666a70"/></svg><div class="cell" style="left:302px;top:167px;width:50px"></div><div class="cell" style="left:352px;top:167px;width:101px;border-right:1px solid #c5c5c5"></div></div>
<svg style="left:670px;top:300px" width="200" height="26" viewBox="670 300 200 26"><path d="M682.5 313.6 L846 312.6" stroke="#fa3e3e" stroke-width="5" stroke-linecap="round" fill="none"/><path d="M843.5 305.2 L858.5 312.6 L843.5 320.2 Z" fill="#fa3e3e"/></svg>
<span class="t" style="left:11px;top:693px;">Created by</span>
<div class="inp ro" style="left:74px;top:689px;width:199px"><span class="t" style="left:6px;letter-spacing:-0.1px">ADMIN 2023-04-17 15:33</span></div>
<span class="t" style="left:282px;top:693px;letter-spacing:-0.125px">Last modified by</span>
<div class="inp ro" style="left:370px;top:689px;width:200px"><span class="t" style="left:6px;letter-spacing:-0.1px">ADMIN 2023-04-17 15:42</span></div>
<div style="left:572px;top:689px;width:20px;height:20px;border:1px solid #8c8c8c;border-radius:2.5px;background:linear-gradient(#ffffff,#e6e6e6)"></div>
<svg style="left:574px;top:691px" width="17" height="16" viewBox="0 0 17 16"><path d="M2 2.6 Q2 2 2.6 2 H13 V3.4 L5.6 10.8 H2 Z" fill="#33363a"/><path d="M2.5 10.8 V13 Q2.5 13.6 3.1 13.6 H5.4 V10.8" fill="#fff" stroke="#33363a" stroke-width="1"/><path d="M1 3.6 H2.4 M1 5.1 H2.4 M1 6.6 H2.4 M1 8.1 H2.4 M1 9.6 H2.4 M1 11.1 H2.4" stroke="#33363a" stroke-width="0.8"/><path d="M13.3 4.3 L16.5 7.4 L9.4 14.6 L5.8 15.7 L6.9 12 Z" fill="#1a7fcf" stroke="#f4f4f4" stroke-width="0.6"/><path d="M8.6 12.8 L13.8 7.4" stroke="#fff" stroke-width="0.9"/><path d="M12.5 5.7 L15.1 8.3" stroke="#fff" stroke-width="0.4"/></svg>
</body></html>
